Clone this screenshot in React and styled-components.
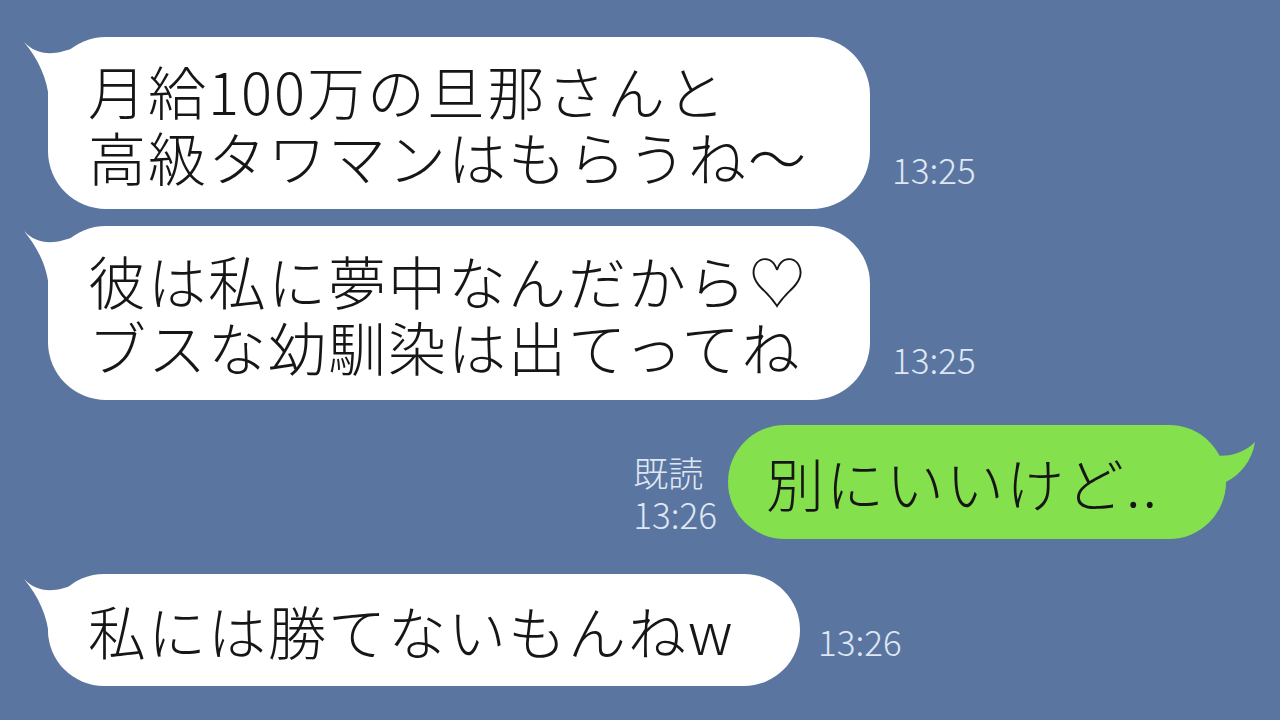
import React from 'react';
import styled, { createGlobalStyle } from 'styled-components';

const Global = createGlobalStyle`
  html, body {
    margin: 0;
    padding: 0;
    background: #5a76a0;
  }
  body {
    font-family: "Noto Sans CJK JP", "Noto Sans", sans-serif;
  }
`;

const Screen = styled.div`
  width: 1280px;
  height: 720px;
  box-sizing: border-box;
  padding: 37px 54px 0 48px;
  background: #5a76a0;
  overflow: hidden;
  display: flex;
  flex-direction: column;
`;

const Row = styled.div`
  display: flex;
  align-items: flex-end;
  justify-content: ${(p) => (p.$mine ? 'flex-end' : 'flex-start')};
  margin-top: ${(p) => p.$gap || 0}px;
`;

const Bubble = styled.div`
  position: relative;
  box-sizing: border-box;
  width: ${(p) => p.$w}px;
  padding: ${(p) => p.$py}px 20px ${(p) => p.$py}px ${(p) => (p.$mine ? 38 : 40)}px;
  background: ${(p) => (p.$mine ? '#84e04d' : '#ffffff')};
  border-radius: 58px;
  color: #161616;
  font-size: 58px;
  font-weight: 300;
  line-height: 66px;
  letter-spacing: 2px;
  white-space: nowrap;
`;

const Tail = styled.svg`
  position: absolute;
  top: 0;
  width: 70px;
  height: 70px;
  ${(p) => (p.$mine ? 'right: -30px;' : 'left: -26px;')}
`;

const Time = styled.div`
  color: #dfe7f4;
  font-size: 35px;
  font-weight: 300;
  line-height: 40px;
  margin-left: ${(p) => p.$ml || 22}px;
  margin-bottom: ${(p) => p.$mb}px;
`;

const Read = styled.div`
  color: #dfe7f4;
  font-size: 35px;
  font-weight: 300;
  line-height: 42px;
  margin-right: 11px;
  margin-bottom: 4px;
`;

function BubbleTail({ mine }) {
  return (
    <Tail $mine={mine} viewBox="0 0 70 70">
      {mine ? (
        <path
          d="M69 17 C 58 28 42 33 26 30 L 20 70 L 38 70 L 40 57 C 54 50 66 36 69 17 Z"
          fill="#84e04d"
        />
      ) : (
        <path
          d="M2 5 C 14 18 32 20 56 9 L 62 64 L 27 64 C 26 42 16 22 2 5 Z"
          fill="#ffffff"
        />
      )}
    </Tail>
  );
}

export default function App() {
  return (
    <>
      <Global />
      <Screen>
        <Row>
          <Bubble $w={822} $py={20}>
            <BubbleTail />
            月給100万の旦那さんと
            <br />
            高級タワマンはもらうね〜
          </Bubble>
          <Time $mb={20}>13:25</Time>
        </Row>
        <Row $gap={17}>
          <Bubble $w={822} $py={21}>
            <BubbleTail />
            彼は私に夢中なんだから♡
            <br />
            ブスな幼馴染は出てってね
          </Bubble>
          <Time $mb={21}>13:25</Time>
        </Row>
        <Row $mine $gap={25}>
          <Read>
            既読
            <br />
            13:26
          </Read>
          <Bubble $mine $w={498} $py={24}>
            <BubbleTail mine />
            別にいいけど..
          </Bubble>
        </Row>
        <Row $gap={35}>
          <Bubble $w={752} $py={23}>
            <BubbleTail />
            私には勝てないもんねw
          </Bubble>
          <Time $ml={18} $mb={25}>13:26</Time>
        </Row>
      </Screen>
    </>
  );
}
